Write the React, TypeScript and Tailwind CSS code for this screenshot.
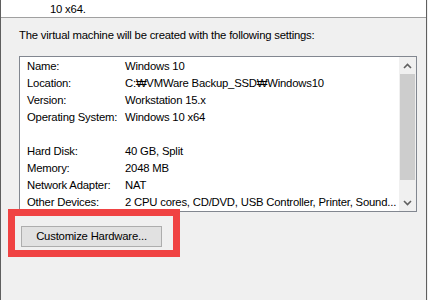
const rows: [string, string][] = [
  ["Name:", "Windows 10"],
  ["Location:", "C:₩VMWare Backup_SSD₩Windows10"],
  ["Version:", "Workstation 15.x"],
  ["Operating System:", "Windows 10 x64"],
  ["", ""],
  ["Hard Disk:", "40 GB, Split"],
  ["Memory:", "2048 MB"],
  ["Network Adapter:", "NAT"],
  ["Other Devices:", "2 CPU cores, CD/DVD, USB Controller, Printer, Sound..."],
];

function Chevron({ up }: { up?: boolean }) {
  return (
    <svg width="9" height="6" viewBox="0 0 9 6" className="block">
      <path
        d={up ? "M1 5 L4.5 1.5 L8 5" : "M1 1 L4.5 4.5 L8 1"}
        fill="none"
        stroke="#606060"
        strokeWidth="1.6"
      />
    </svg>
  );
}

export default function App() {
  return (
    <div
      className="w-[428px] h-[300px] overflow-hidden bg-[#f0f0f0] text-[11.3px] tracking-[-0.2px] text-black"
      style={{ fontFamily: '"Liberation Sans", "Noto Sans CJK KR", sans-serif' }}
    >
      <div className="relative w-[427px] h-[300px] border-l border-r border-[#5f5f5f] bg-[#f0f0f0]">
        {/* wizard header */}
        <div className="h-[18px] overflow-hidden bg-white border-b border-[#a0a0a0]">
          <div className="pl-[49px] -mt-[13px] leading-[15px] whitespace-nowrap">
            <div>Click Finish to create the virtual machine. Then you can install Windows</div>
            <div>10 x64.</div>
          </div>
        </div>

        <div className="pl-[18px] pt-[10px] leading-[15px] whitespace-nowrap">
          The virtual machine will be created with the following settings:
        </div>

        {/* settings list */}
        <div className="ml-[18px] mt-[13px] w-[398px] h-[156px] border border-[#828790] bg-white flex">
          <div className="flex-1 pt-[1px] overflow-hidden">
            {rows.map(([label, value], i) => (
              <div key={i} className="flex h-[17px] items-center whitespace-nowrap">
                <div className="w-[105px] pl-[7px] shrink-0">{label}</div>
                <div>{value}</div>
              </div>
            ))}
          </div>
          <div className="w-[17px] bg-[#f0f0f0] flex flex-col">
            <div className="h-[17px] flex items-center justify-center">
              <Chevron up />
            </div>
            <div className="mx-[1px] h-[106px] bg-[#cdcdcd]" />
            <div className="flex-1" />
            <div className="h-[17px] flex items-center justify-center">
              <Chevron />
            </div>
          </div>
        </div>

        <button className="ml-[20px] mt-[14px] w-[141px] h-[21px] border border-[#adadad] bg-[#e1e1e1] text-[11.3px] leading-none">
          Customize Hardware...
        </button>

        {/* annotation frame */}
        <div className="absolute left-[7px] top-[209px] w-[172px] h-[48px] border-[7px] border-[#f04343]" />
      </div>
    </div>
  );
}
